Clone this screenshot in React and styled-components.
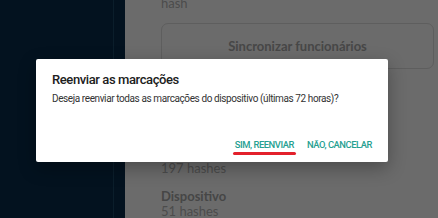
import React from 'react';
import styled, { createGlobalStyle } from 'styled-components';

const Global = createGlobalStyle`
  html, body {
    margin: 0;
    padding: 0;
    width: 438px;
    height: 218px;
    overflow: hidden;
    background: #6b6b6b;
  }
`;

const Page = styled.div`
  position: relative;
  display: flex;
  width: 438px;
  height: 218px;
  overflow: hidden;
  font-family: Lato, "Open Sans", sans-serif;
`;

const Sidebar = styled.div`
  display: flex;
  width: 125px;
  flex-shrink: 0;
  background: #03121f;
`;

const SideNav = styled.div`
  width: 113px;
  border-right: 1px solid #0b1e2b;
`;

const Main = styled.main`
  flex: 1;
  padding: 0 4px 0 36px;
  background: #6b6b6b;
  color: #474747;
`;

const Line = styled.div`
  font-size: 13px;
  line-height: 15px;
  color: #4c4c4c;
  margin-top: ${p => p.$offset || 0}px;
`;

const Card = styled.div`
  margin-top: 12px;
  height: 44px;
  border: 1.5px solid #5e5e5e;
  border-radius: 7px;
  display: flex;
  align-items: center;
  justify-content: center;
  font-size: 13px;
  font-weight: 700;
  color: #474747;
`;

const Section = styled.div`
  margin-top: ${p => p.$gap}px;
`;

const Label = styled.div`
  font-size: 13px;
  line-height: 15px;
  font-weight: 700;
  color: #464646;
`;

const Dialog = styled.div`
  position: absolute;
  left: 36px;
  top: 59px;
  width: 352px;
  height: 103px;
  box-sizing: border-box;
  padding: 11px 16px 0 16px;
  background: #fff;
  border-radius: 2px;
  box-shadow: 0 6px 18px rgba(0, 0, 0, 0.3);
  font-family: Roboto, "Liberation Sans", sans-serif;
  display: flex;
  flex-direction: column;
`;

const Title = styled.h2`
  margin: 0;
  font-size: 13px;
  line-height: 20px;
  font-weight: 500;
  letter-spacing: -0.4px;
  color: #202020;
`;

const Body = styled.p`
  margin: 1px 0 0;
  font-size: 10px;
  line-height: 16px;
  letter-spacing: -0.4px;
  white-space: nowrap;
  color: #333;
`;

const Actions = styled.div`
  margin-top: auto;
  margin-bottom: 10px;
  display: flex;
  justify-content: flex-end;
  gap: 13px;
`;

const Action = styled.button`
  position: relative;
  border: 0;
  padding: 0;
  background: none;
  font-family: Roboto, "Liberation Sans", sans-serif;
  font-size: 9.4px;
  line-height: 14px;
  font-weight: 500;
  letter-spacing: -0.45px;
  color: #26a091;

  &::after {
    content: "";
    display: ${p => (p.$marked ? 'block' : 'none')};
    position: absolute;
    left: -2px;
    right: -2px;
    bottom: -3px;
    height: 3px;
    border-radius: 2px;
    background: #e3202b;
  }
`;

export default function App() {
  return (
    <>
      <Global />
      <Page>
        <Sidebar>
          <SideNav />
        </Sidebar>
        <Main>
          <Line $offset={-4}>hash</Line>
          <Card>Sincronizar funcionários</Card>
          <Section $gap={77}>
            <Label>Nuvem</Label>
            <Line>197 hashes</Line>
          </Section>
          <Section $gap={13}>
            <Label>Dispositivo</Label>
            <Line>51 hashes</Line>
          </Section>
        </Main>
        <Dialog>
          <Title>Reenviar as marcações</Title>
          <Body>Deseja reenviar todas as marcações do dispositivo (últimas 72 horas)?</Body>
          <Actions>
            <Action $marked>SIM, REENVIAR</Action>
            <Action>NÃO, CANCELAR</Action>
          </Actions>
        </Dialog>
      </Page>
    </>
  );
}
